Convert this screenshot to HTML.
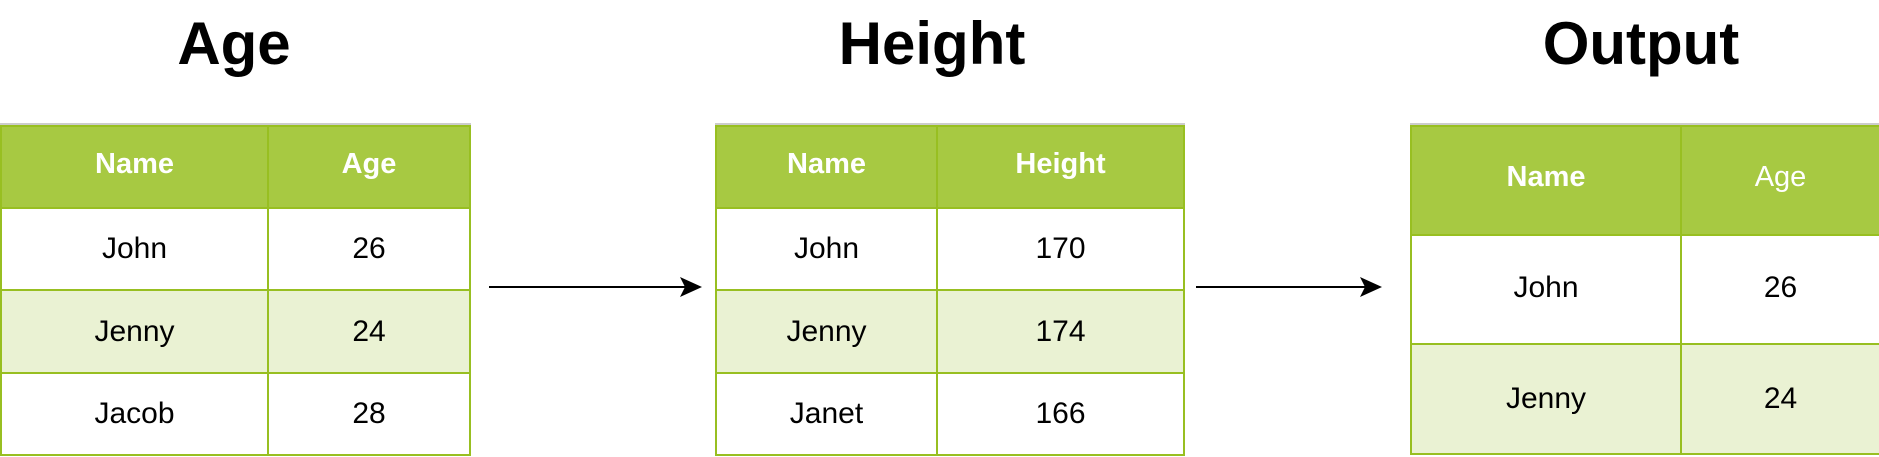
<!DOCTYPE html><html><head><style>
body{margin:0;width:1879px;height:457px;background:#fff;position:relative;overflow:hidden;font-family:"Liberation Sans",Arial,sans-serif}
.a{position:absolute}
.t{position:absolute;font-weight:bold;font-size:60px;color:#000;text-align:center;width:400px;top:9px;line-height:70px}
.c{position:absolute;display:flex;align-items:center;justify-content:center;box-sizing:border-box;border:2px solid #98bf21;font-size:30px;color:#000}
.h{background:#a7c942;color:#fff;font-weight:bold;font-size:29px;padding-bottom:6px}
.w{background:#fff}.g{background:#eaf2d3}
</style></head><body>
<div class="t" style="left:34px">Age</div>
<div class="t" style="left:732px">Height</div>
<div class="t" style="left:1441px">Output</div>

<div class="a" style="left:0;top:123px;width:471px;height:3px;background:#ccc"></div>
<div class="c h" style="left:0;top:125px;width:269px;height:84px">Name</div>
<div class="c h" style="left:267px;top:125px;width:204px;height:84px">Age</div>
<div class="c w" style="left:0;top:207px;width:269px;height:84px">John</div>
<div class="c w" style="left:267px;top:207px;width:204px;height:84px">26</div>
<div class="c g" style="left:0;top:289px;width:269px;height:85px">Jenny</div>
<div class="c g" style="left:267px;top:289px;width:204px;height:85px">24</div>
<div class="c w" style="left:0;top:372px;width:269px;height:84px">Jacob</div>
<div class="c w" style="left:267px;top:372px;width:204px;height:84px">28</div>

<div class="a" style="left:715px;top:123px;width:470px;height:3px;background:#ccc"></div>
<div class="c h" style="left:715px;top:125px;width:223px;height:84px">Name</div>
<div class="c h" style="left:936px;top:125px;width:249px;height:84px">Height</div>
<div class="c w" style="left:715px;top:207px;width:223px;height:84px">John</div>
<div class="c w" style="left:936px;top:207px;width:249px;height:84px">170</div>
<div class="c g" style="left:715px;top:289px;width:223px;height:85px">Jenny</div>
<div class="c g" style="left:936px;top:289px;width:249px;height:85px">174</div>
<div class="c w" style="left:715px;top:372px;width:223px;height:84px">Janet</div>
<div class="c w" style="left:936px;top:372px;width:249px;height:84px">166</div>

<div class="a" style="left:1410px;top:123px;width:469px;height:3px;background:#ccc"></div>
<div class="c h" style="left:1410px;top:125px;width:272px;height:111px">Name</div>
<div class="c h" style="left:1680px;top:125px;width:201px;height:111px;font-weight:normal">Age</div>
<div class="c w" style="left:1410px;top:234px;width:272px;height:111px;padding-bottom:4px">John</div>
<div class="c w" style="left:1680px;top:234px;width:201px;height:111px;padding-bottom:4px">26</div>
<div class="c g" style="left:1410px;top:343px;width:272px;height:112px">Jenny</div>
<div class="c g" style="left:1680px;top:343px;width:201px;height:112px">24</div>

<svg class="a" style="left:0;top:0" width="1879" height="457">
<line x1="489" y1="287" x2="690" y2="287" stroke="#000" stroke-width="2"/>
<path d="M680 277 L702 287 L680 297 L685 287 Z" fill="#000"/>
<line x1="1196" y1="287" x2="1370" y2="287" stroke="#000" stroke-width="2"/>
<path d="M1360 277 L1382 287 L1360 297 L1365 287 Z" fill="#000"/>
</svg>
</body></html>
